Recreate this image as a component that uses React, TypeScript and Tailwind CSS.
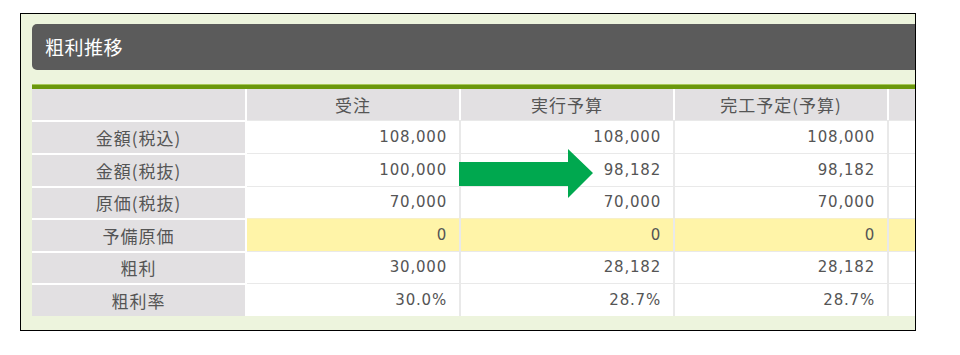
const rows = [
  { label: '金額(税込)', values: ['108,000', '108,000', '108,000'], h: 'h-[33px]' },
  { label: '金額(税抜)', values: ['100,000', '98,182', '98,182'], h: 'h-[33px]' },
  { label: '原価(税抜)', values: ['70,000', '70,000', '70,000'], h: 'h-[32px]' },
  { label: '予備原価', values: ['0', '0', '0'], h: 'h-[33px]', yellow: true },
  { label: '粗利', values: ['30,000', '28,182', '28,182'], h: 'h-[32px]' },
  { label: '粗利率', values: ['30.0%', '28.7%', '28.7%'], h: 'h-[33px]' },
];

const jp = "font-['Noto_Sans_CJK_JP','Noto_Sans',sans-serif]";
const num = "font-['DejaVu_Sans','Noto_Sans',sans-serif]";

function Arrow() {
  return (
    <svg
      className="absolute left-[427px] top-[60px]"
      width="134"
      height="49"
      viewBox="0 0 134 49"
    >
      <polygon points="0,13 109,13 109,0 134,24 109,49 109,37 0,37" fill="#00a84f" />
    </svg>
  );
}

export default function App() {
  return (
    <div className={`w-[960px] h-[355px] bg-white pt-[13px] pl-[20px] ${jp}`}>
      <div className="w-[896px] h-[318px] border border-black bg-[#edf4dd] overflow-hidden pt-[10px] pl-[11px]">
        <div className="w-[900px] h-[46px] bg-[#5b5b5b] rounded-l-[5px] flex items-center pl-[13px]">
          <span className="text-white text-[19px] tracking-[0.5px]">粗利推移</span>
        </div>

        <div className="mt-[14px] w-[900px] h-[5px] bg-[#6b980c] border-t border-[#a8c85a]" />

        <div className="relative w-[900px] text-[#555] text-[17px] tracking-[1px]">
          <div className="flex h-[31px]">
            <div className="w-[215px] bg-[#e2e0e2] border-r-2 border-white" />
            {['受注', '実行予算', '完工予定(予算)'].map((h) => (
              <div
                key={h}
                className="w-[214px] bg-[#e2e0e2] border-r-2 border-white flex items-center justify-center"
              >
                {h}
              </div>
            ))}
            <div className="flex-1 bg-[#e2e0e2]" />
          </div>

          {rows.map((r) => (
            <div key={r.label} className={`flex ${r.h}`}>
              <div className="w-[215px] bg-[#e2e0e2] border-t-2 border-r-2 border-white flex items-center justify-center">
                {r.label}
              </div>
              {r.values.map((v, i) => (
                <div
                  key={i}
                  className={`w-[214px] border-t border-r-2 border-[#e9e9e9] flex items-center justify-end pr-[12px] ${num} text-[15px] tracking-[0.8px] ${
                    r.yellow ? 'bg-[#fff4a8] border-t-[#f7f0c8]' : 'bg-white'
                  }`}
                >
                  {v}
                </div>
              ))}
              <div
                className={`flex-1 border-t border-[#e9e9e9] ${r.yellow ? 'bg-[#fff4a8]' : 'bg-white'}`}
              />
            </div>
          ))}

          <Arrow />
        </div>
      </div>
    </div>
  );
}
